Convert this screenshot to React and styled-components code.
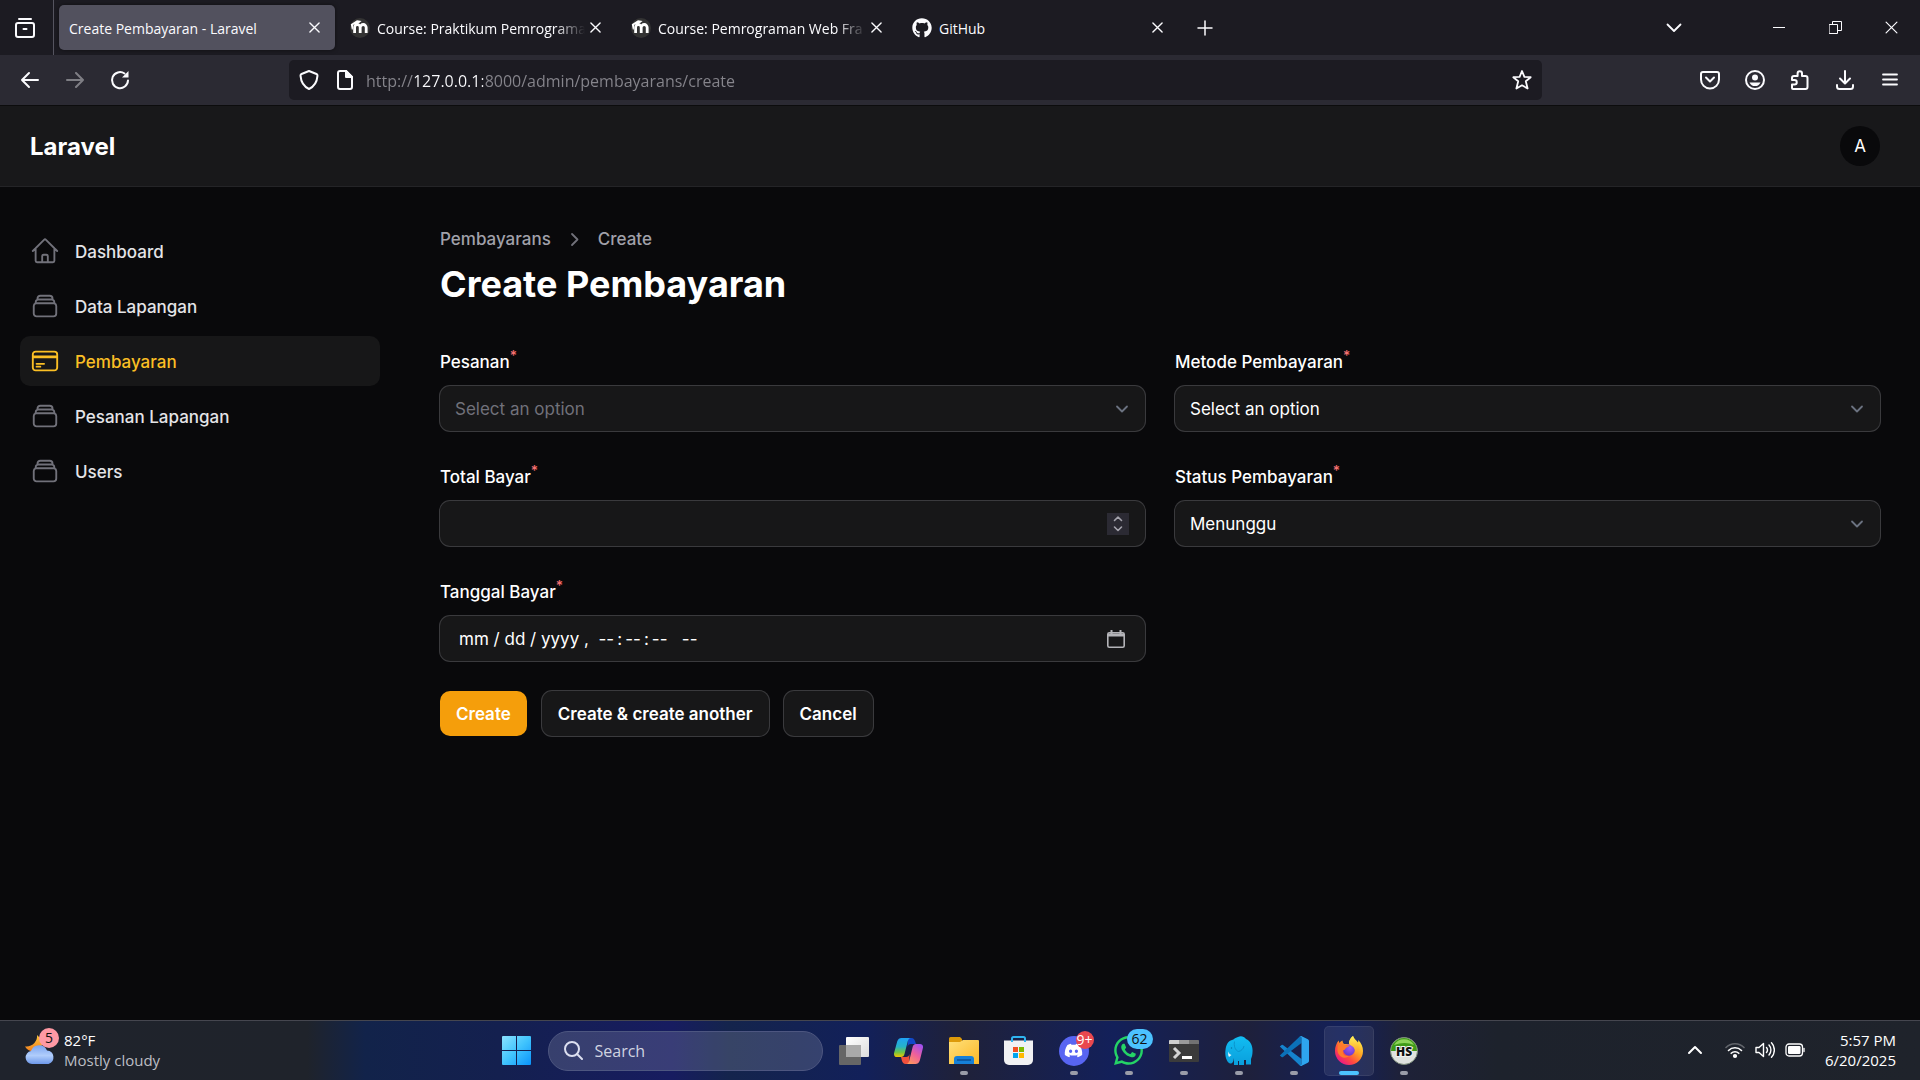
import React from "react";
import styled, { createGlobalStyle, css } from "styled-components";
import { HiOutlineHome, HiOutlineRectangleStack, HiOutlineCreditCard } from "react-icons/hi2";
import { FaGithub, FaDiscord, FaWhatsapp } from "react-icons/fa6";

const ui = `"Inter", "Roboto", sans-serif`;
const system = `"Open Sans", "Noto Sans", sans-serif`;

const GlobalStyle = createGlobalStyle`
  *, *::before, *::after { box-sizing: border-box; }
  body { margin: 0; background: #09090b; font-family: ${ui}; color: #fff; }
  button, input, select { font: inherit; color: inherit; margin: 0; }
  button { border: 0; background: none; padding: 0; cursor: pointer; }
  a { color: inherit; text-decoration: none; }
  svg { display: block; flex: none; }
`;

const Screen = styled.div`
  display: flex;
  flex-direction: column;
  min-height: 100vh;
`;

/* ---------- browser window ---------- */

const TabStrip = styled.div`
  display: flex;
  align-items: center;
  height: 55px;
  background: #1c1b22;
  color: #fbfbfe;
  font: 14px/20px ${system};
`;

const StripStart = styled.div`
  display: flex;
  align-items: center;
  justify-content: center;
  width: 54px;
  height: 55px;
  padding-right: 3px;
  border-right: 1px solid #55545f;
`;

const Tabs = styled.div`
  display: flex;
  gap: 5px;
  padding-left: 5px;
`;

const Tab = styled.div`
  display: flex;
  align-items: center;
  gap: 7px;
  width: 276px;
  height: 45px;
  padding: 0 11px 0 10px;
  border-radius: 5px;
  ${(p) => p.$active && css`
    background: #52515e;
    box-shadow: 0 0 4px rgba(0, 0, 0, 0.5);
  `}
`;

const TabTitle = styled.span`
  flex: 1;
  padding-top: 2px;
  overflow: hidden;
  white-space: nowrap;
  ${(p) => p.$fade && css`
    mask-image: linear-gradient(to left, transparent, #000 30px);
    margin-right: -7px;
  `}
`;

const IconButton = styled.button`
  display: flex;
  align-items: center;
  justify-content: center;
  width: ${(p) => p.$w || 45}px;
  height: ${(p) => p.$h || 40}px;
  opacity: ${(p) => (p.$dim ? 0.4 : 1)};
`;

const WindowControls = styled.div`
  display: flex;
  align-items: center;
  margin-left: auto;
`;

const ListTabs = styled.div`
  padding-right: 54px;
`;

const Toolbar = styled.div`
  display: flex;
  align-items: center;
  height: 51px;
  padding: 0 8px 0 7px;
  background: #2b2a33;
  border-bottom: 1px solid #0c0c0d;
  color: #fbfbfe;
`;

const NavButtons = styled.div`
  display: flex;
  flex: 0 1 282px;
`;

const AddressBar = styled.div`
  display: flex;
  align-items: center;
  flex: 1;
  height: 40px;
  padding: 0 1px 0 2px;
  border-radius: 5px;
  background: #1c1b22;
`;

const Address = styled.input`
  flex: 1;
  min-width: 0;
  height: 32px;
  margin-left: 4px;
  padding: 2px 0 0;
  border: 0;
  outline: 0;
  font: 16px/24px ${system};
  color: #8f8f9a;
  -webkit-text-fill-color: transparent;
  background: linear-gradient(to right, #86858c 49px, #fbfbfe 49px, #fbfbfe 117px, #86858c 117px);
  background-clip: text;
  -webkit-background-clip: text;
`;

const ToolbarEnd = styled.div`
  display: flex;
  justify-content: flex-end;
  flex: 0 1 370px;
`;

/* ---------- admin page ---------- */

const Topbar = styled.header`
  display: flex;
  align-items: center;
  justify-content: space-between;
  height: 81px;
  padding: 0 40px 0 30px;
  background: #18181a;
  border-bottom: 1px solid #242427;
`;

const Brand = styled.a`
  padding-top: 2px;
  font-size: 24px;
  font-weight: 700;
  line-height: 32px;
`;

const Avatar = styled.button`
  width: 40px;
  height: 40px;
  border-radius: 50%;
  background: #09090b;
  font-size: 17px;
`;

const Page = styled.div`
  display: flex;
  flex: 1;
`;

const Sidebar = styled.nav`
  display: flex;
  flex-direction: column;
  gap: 5px;
  width: 400px;
  padding: 39px 20px;
`;

const NavItem = styled.a`
  display: flex;
  align-items: center;
  gap: 15px;
  height: 50px;
  padding: 0 10px;
  border-radius: 10px;
  font-size: 17px;
  font-weight: 500;
  color: ${(p) => (p.$active ? "#fbbf24" : "#e4e4e7")};
  background: ${(p) => (p.$active ? "#171718" : "transparent")};
  svg {
    width: 30px;
    height: 30px;
    color: ${(p) => (p.$active ? "#fbbf24" : "#71717a")};
  }
`;

const NavText = styled.span`
  padding-top: 2px;
`;

const Main = styled.main`
  display: flex;
  flex-direction: column;
  flex: 1;
  padding: 37px 40px;
`;

const Breadcrumbs = styled.nav`
  display: flex;
  align-items: center;
  gap: 11px;
  font-size: 17px;
  line-height: 30px;
  font-weight: 500;
  color: #a1a1aa;
`;

const Title = styled.h1`
  margin: 6px 0 38px;
  font-size: 36px;
  line-height: 48px;
  font-weight: 700;
`;

const Form = styled.form`
  display: grid;
  grid-template-columns: 1fr 1fr;
  gap: 30px;
`;

const Field = styled.div`
  display: flex;
  flex-direction: column;
  gap: 8px;
`;

const Label = styled.label`
  font-size: 17px;
  line-height: 32px;
  font-weight: 500;
  color: #fff;
`;

const Required = styled.sup`
  font-size: 14px;
  line-height: 0;
  color: #f87171;
`;

const Control = styled.div`
  position: relative;
  display: flex;
  align-items: center;
  height: 45px;
  border-radius: 10px;
  background: #171718;
  box-shadow: 0 0 0 1px #3a3a3d;
`;

const inputBase = css`
  width: 100%;
  height: 45px;
  padding: 0 15px;
  border: 0;
  outline: 0;
  background: transparent;
  font-size: 17px;
`;

const Select = styled.select`
  ${inputBase}
  appearance: none;
  color: ${(p) => (p.$muted ? "#71717a" : "#fff")};
`;

const Chevron = styled.svg`
  position: absolute;
  right: 13px;
  pointer-events: none;
`;

const TextInput = styled.input`
  ${inputBase}
  padding-left: ${(p) => (p.$date ? 19 : 15)}px;
  appearance: textfield;
  &::-webkit-inner-spin-button { appearance: none; margin: 0; }
`;

const Stepper = styled.div`
  display: flex;
  flex-direction: column;
  flex: none;
  margin-right: 16px;
  background: #2b2a33;
`;

const PickerButton = styled.button`
  flex: none;
  margin-right: 19px;
`;

const Actions = styled.div`
  display: flex;
  gap: 15px;
  grid-column: 1 / -1;
`;

const ActionButton = styled.button`
  height: 45px;
  padding: 0 16px;
  border-radius: 10px;
  font-size: 17px;
  font-weight: 600;
  background: ${(p) => (p.$primary ? "#f59e0b" : "#171718")};
  box-shadow: ${(p) => (p.$primary ? "none" : "0 0 0 1px #3a3a3d")};
`;

/* ---------- taskbar ---------- */

const Taskbar = styled.footer`
  display: grid;
  grid-template-columns: 1fr auto 1fr;
  align-items: center;
  height: 60px;
  border-top: 1px solid #45464f;
  background: linear-gradient(to right, #1f232c 0, #1f232b 16%, #12234a 19%, #14204f 26%, #171c60 35%, #14244c 38%,
    #12205a 45%, #1f2139 50%, #13205a 58%, #1e203b 65%, #13205a 70%, #1e2138 73%, #1d222c 78%, #1f232b 100%);
  font: 15px/20px ${system};
`;

const Weather = styled.button`
  display: flex;
  align-items: center;
  gap: 9px;
  padding: 0 0 1px 25px;
  text-align: left;
`;

const WeatherIcon = styled.span`
  position: relative;
`;

const WeatherText = styled.span`
  display: flex;
  flex-direction: column;
`;

const Faint = styled.span`
  color: #bcbec4;
`;

const Badge = styled.span`
  position: absolute;
  top: ${(p) => p.$top}px;
  right: ${(p) => p.$right}px;
  min-width: ${(p) => p.$min || 20}px;
  height: ${(p) => p.$h || 20}px;
  border-radius: 10px;
  background: ${(p) => p.$bg};
  color: ${(p) => p.$fg || "#111"};
  font: 14px/${(p) => p.$h || 20}px ${system};
  text-align: center;
`;

const Apps = styled.div`
  display: flex;
  align-items: center;
  gap: 5px;
`;

const SearchBox = styled.label`
  display: flex;
  align-items: center;
  gap: 12px;
  width: 275px;
  height: 40px;
  margin: 0 1px;
  padding: 0 15px;
  border: 1px solid #4d5680;
  border-radius: 20px;
  background: rgba(255, 255, 255, 0.15);
`;

const SearchInput = styled.input`
  width: 100%;
  padding: 0;
  border: 0;
  outline: 0;
  background: transparent;
  font: 16px/24px ${system};
  &::placeholder { color: #d0d3e0; opacity: 1; }
`;

const AppTile = styled.button`
  position: relative;
  display: flex;
  align-items: center;
  justify-content: center;
  width: 50px;
  height: 50px;
  border-radius: 5px;
  ${(p) => p.$active && css`
    background: rgba(255, 255, 255, 0.08);
    box-shadow: inset 0 0 0 1px rgba(255, 255, 255, 0.07);
  `}
  &::after {
    content: "";
    display: ${(p) => (p.$running || p.$active ? "block" : "none")};
    position: absolute;
    bottom: 1px;
    left: calc(50% - ${(p) => (p.$active ? 10 : 4)}px);
    width: ${(p) => (p.$active ? 20 : 8)}px;
    height: 4px;
    border-radius: 2px;
    background: ${(p) => (p.$active ? "#4cc2ff" : "#9a9ca8")};
  }
`;

const DiscordMark = styled.span`
  display: flex;
  align-items: center;
  justify-content: center;
  width: 30px;
  height: 30px;
  border-radius: 50%;
  background: #5865f2;
`;

const Tray = styled.div`
  display: flex;
  align-items: center;
  justify-content: flex-end;
  padding: 0 24px 1px 0;
`;

const TrayButton = styled(IconButton)`
  margin-right: ${(p) => p.$gap || 0}px;
`;

const Clock = styled.button`
  display: flex;
  flex-direction: column;
  align-items: flex-end;
  margin-left: 15px;
`;

/* ---------- drawings ---------- */

const Line = ({ size = 20, w = 2, box = 20, children, ...rest }) => (
  <svg width={size} height={size} viewBox={`0 0 ${box} ${box}`} fill="none" stroke="currentColor"
    strokeWidth={w} strokeLinecap="round" strokeLinejoin="round" {...rest}>
    {children}
  </svg>
);

const CloseIcon = ({ size = 12, w = 1.5 }) => (
  <Line size={size} box={12} w={w}><path d="M1 1l10 10M11 1L1 11" /></Line>
);

const MoodleIcon = () => (
  <svg width="20" height="24" viewBox="0 0 20 24">
    <circle cx="10" cy="12" r="10" fill="#333" />
    <path d="M4.6 17v-5.5a2.8 2.8 0 0 1 5.6 0V17M10.2 17v-5.5a3 3 0 0 1 6 0V17" fill="none" stroke="#fff" strokeWidth="2.8" />
    <path d="M.8 8.2L7 4.2l4.6.8-4 3.2-4.4.6-.4 4.6-1 .2z" fill="#fff" />
  </svg>
);

const ChevronDown = () => (
  <Chevron width="20" height="20" viewBox="0 0 20 20" fill="none" stroke="#6b7280" strokeWidth="1.8"
    strokeLinecap="round" strokeLinejoin="round">
    <path d="M5 7.5l5 5 5-5" />
  </Chevron>
);

const MoonCloud = () => (
  <svg width="30" height="30" viewBox="0 0 30 30">
    <defs>
      <linearGradient id="moon" x1="0" y1="0" x2="0" y2="1">
        <stop offset="0" stopColor="#ffc83d" /><stop offset="1" stopColor="#f0801f" />
      </linearGradient>
      <linearGradient id="cloud" x1="0" y1="0" x2="0" y2="1">
        <stop offset="0" stopColor="#7aa3f0" /><stop offset=".55" stopColor="#b0cdfb" /><stop offset="1" stopColor="#6d98ea" />
      </linearGradient>
    </defs>
    <path d="M12 0c1 6-5 12.500-12 11.500C2 15 6 17 10 16c6-1 9-7 6-12z" fill="url(#moon)" />
    <path d="M7 29a6.500 6.500 0 0 1-1-12.900A8.500 8.500 0 0 1 22 15.500 6.900 6.900 0 0 1 23.500 29z" fill="url(#cloud)" />
  </svg>
);

const WindowsLogo = () => (
  <svg width="29" height="29" viewBox="0 0 29 29">
    <defs>
      <linearGradient id="win" x1="0" y1="0" x2="1" y2="1">
        <stop offset="0" stopColor="#8be2ff" /><stop offset=".5" stopColor="#41c4fd" /><stop offset="1" stopColor="#0a93fb" />
      </linearGradient>
    </defs>
    <path d="M1 0h13v14H0V1a1 1 0 0 1 1-1zM15 0h13a1 1 0 0 1 1 1v13H15zM0 15h14v14H1a1 1 0 0 1-1-1zM15 15h14v13a1 1 0 0 1-1 1H15z" fill="url(#win)" />
  </svg>
);

const TaskViewIcon = () => (
  <svg width="30" height="28" viewBox="0 0 30 28">
    <defs>
      <linearGradient id="pane" x1="0" y1="0" x2="1" y2="1">
        <stop offset="0" stopColor="#fff" /><stop offset="1" stopColor="#dcdcdc" />
      </linearGradient>
    </defs>
    <rect x="0" y="8" width="22" height="20" rx="1" fill="#666" />
    <rect x="7" y="0" width="23" height="20" rx="1" fill="url(#pane)" />
    <path d="M7 8h15v12H7z" fill="#a9a9a9" />
  </svg>
);

const CopilotIcon = () => (
  <svg width="29" height="26" viewBox="0 0 29 26">
    <defs>
      <linearGradient id="cpA" x1="0" y1="0" x2="0" y2="1">
        <stop offset="0" stopColor="#1fa2f5" /><stop offset=".45" stopColor="#26b3c9" /><stop offset=".75" stopColor="#6fc544" /><stop offset="1" stopColor="#f4c400" />
      </linearGradient>
      <linearGradient id="cpB" x1=".8" y1="0" x2=".2" y2="1">
        <stop offset="0" stopColor="#a050f0" /><stop offset=".5" stopColor="#f0609a" /><stop offset="1" stopColor="#ff9a5c" />
      </linearGradient>
    </defs>
    <path d="M14 0h3.500c2 0 3 1.500 3.500 3l1 3h-5c-2 0-3 1-3.500 3z" fill="#1248c8" />
    <path d="M15 26h-3.500c-2 0-3-1.500-3.500-3l-1-4h5c2 0 3-1 3.500-3z" fill="#f0503c" />
    <path d="M7.500 0H17c-2 0-2.700 1.500-3.200 3l-3.300 13c-.5 2-1.500 3-3.500 3H3c-2.500 0-3.500-2-2.800-4.500l3-11C4 1 5.500 0 7.500 0z" fill="url(#cpA)" />
    <path d="M21.500 26H12c2 0 2.700-1.500 3.200-3l3.300-13.500c.5-2 1.500-3.500 3.500-3.500h4c2.500 0 3.500 2 2.800 4.500l-3 12C25 25 23.500 26 21.500 26z" fill="url(#cpB)" />
  </svg>
);

const FolderIcon = () => (
  <svg width="30" height="27" viewBox="0 0 30 27">
    <defs>
      <linearGradient id="folder" x1="0" y1="0" x2="1" y2="1">
        <stop offset="0" stopColor="#ffe07a" /><stop offset="1" stopColor="#fcb827" />
      </linearGradient>
    </defs>
    <path d="M0 1.500A1.500 1.500 0 0 1 1.500 0H11l2 2v3H0z" fill="#dd9a0a" />
    <path d="M0 5h11l3-2H29a1 1 0 0 1 1 1V27H0z" fill="url(#folder)" />
    <path d="M5 27v-5a3 3 0 0 1 3-3h14a3 3 0 0 1 3 3v5z" fill="#1680d8" />
    <path d="M8 23h14" stroke="#0b4f94" strokeWidth="1.500" />
  </svg>
);

const StoreIcon = () => (
  <svg width="29" height="29" viewBox="0 0 29 29">
    <path d="M0 4.500h29V24a5 5 0 0 1-5 5H5a5 5 0 0 1-5-5z" fill="#f1f1f3" />
    <path d="M8 6V2.500A1.500 1.500 0 0 1 9.500 1h10A1.500 1.500 0 0 1 21 2.500V6" fill="none" stroke="#2fb4f0" strokeWidth="2" />
    <path d="M9 11h5v5H9z" fill="#f25022" /><path d="M15 11h5v5h-5z" fill="#7fba00" />
    <path d="M9 17h5v5H9z" fill="#00a4ef" /><path d="M15 17h5v5h-5z" fill="#ffb900" />
  </svg>
);

const TerminalIcon = () => (
  <svg width="30" height="22" viewBox="0 0 30 22">
    <rect width="30" height="22" rx="1" fill="#3b3b3b" />
    <path d="M0 1a1 1 0 0 1 1-1h9v4H0z" fill="#d0d0d0" /><path d="M10 0h10v4H10z" fill="#9a9a9a" />
    <path d="M20 0h9a1 1 0 0 1 1 1v3H20z" fill="#727272" />
    <path d="M5 8l5 5-5 5" fill="none" stroke="#d4d4d4" strokeWidth="3" /><path d="M13 16h10v3H13z" fill="#fff" />
  </svg>
);

const ElephantIcon = () => (
  <svg width="28" height="30" viewBox="0 0 28 30">
    <defs>
      <linearGradient id="elephant" x1="0" y1="0" x2="0" y2="1">
        <stop offset="0" stopColor="#12bdf2" /><stop offset="1" stopColor="#0a9fdc" />
      </linearGradient>
    </defs>
    <path d="M13 1c3-1.500 6-.5 8 2C25.500 5 28 10 27.500 16c0 3-.8 5-1.500 7v5.500h-5V24h-2v5h-5v-4h-1v4H9V22c-.5 3-1 5.500-3.500 5.500C2 27.500-.5 20 .5 14 1 9 3 5 7 4c2-.5 3-2.300 6-3z" fill="url(#elephant)" />
    <path d="M9.500 5.500c-.8 4 .5 9 4 10 2.500-.5 5-2.500 5.500-5.500" fill="none" stroke="#0a8dc4" strokeWidth=".8" />
    <path d="M3.500 15.500c.5 2.500 1.500 3 3 3.500l-2.500 2c-1-1.500-1-3.500-.5-5.500z" fill="#e8f6fd" />
    <circle cx="6.500" cy="12" r=".7" fill="#0873a3" />
  </svg>
);

const VsCodeIcon = () => (
  <svg width="30" height="30" viewBox="0 0 30 30">
    <path d="M.8 10.600L2.600 9Q3.300 8.500 4 9L22.500 23V30Q21 30 20.500 29.300Z" fill="#1583cd" />
    <path d="M.8 19.400L2.600 21Q3.300 21.500 4 21L22.500 7V0Q21 0 20.500 .7Z" fill="#0b71b8" />
    <path d="M22.300 0L28.800 3.200Q30 3.800 30 5V25Q30 26.200 28.800 26.800L22.300 30Q21 30 20.500 29.300Q22.500 30 22.500 28V2Q22.500 0 20.500 .7Q21 0 22.300 0Z" fill="#2ea5ef" />
  </svg>
);

const FirefoxIcon = () => (
  <svg width="28" height="29" viewBox="0 0 28 29">
    <defs>
      <linearGradient id="ffBody" x1=".9" y1=".1" x2=".2" y2=".95">
        <stop offset="0" stopColor="#fff04a" /><stop offset=".4" stopColor="#ffa022" />
        <stop offset=".7" stopColor="#ff4b3e" /><stop offset="1" stopColor="#e8168a" />
      </linearGradient>
      <linearGradient id="ffFlame" x1="0" y1="0" x2="0" y2="1">
        <stop offset="0" stopColor="#fff25a" /><stop offset="1" stopColor="#ff9a20" />
      </linearGradient>
      <radialGradient id="ffGlobe" cx=".6" cy=".3" r=".8">
        <stop offset="0" stopColor="#a35cf5" /><stop offset="1" stopColor="#5b34c8" />
      </radialGradient>
    </defs>
    <path d="M18 0c1 3 3 4 5 6.500.3-1 .3-1.500.2-2.500C26.500 7 28 11 28 15a14 14 0 0 1-28 0c0-4 1.300-7.500 3.600-10.500L4.400 7C5.300 5.800 6.200 5 7.500 4.500c.2 1.500.5 2.500 1.500 3.500h5c0-3.500 1.500-6 4-8z" fill="url(#ffBody)" />
    <circle cx="14" cy="14" r="5.800" fill="url(#ffGlobe)" />
    <path d="M18 0c1 3 3 4 4.500 7 2 4 1 9-2.500 11.500 1-4-.5-7.500-4-9-2-1-2-2.500-2-3.500C14.500 3.500 16 1.500 18 0z" fill="url(#ffFlame)" />
    <path d="M3.600 8c3-.8 5 0 6.500 1.200H15c-1 1.800-4 2-4.500 3.300 0 1-1.500 1.500-2.500 2C7 18 10 20.500 14 20c-3 3-9 2-11-3-1-3-.6-6 .6-9z" fill="#ff7a2c" />
  </svg>
);

const HeidiIcon = () => (
  <svg width="28" height="28" viewBox="0 0 28 28">
    <circle cx="14" cy="14" r="13.500" fill="#dfe1de" stroke="#7b8b78" />
    <path d="M1 14a13 13 0 0 1 26 0z" fill="#3f9a18" />
    <path d="M4 8a11.500 11.500 0 0 1 20 0q-9-4-20 0z" fill="#8ed35a" />
    <text x="14" y="18.500" textAnchor="middle" fontFamily="Open Sans" fontWeight="800" fontSize="12" fill="#111" stroke="#f2f2f2" strokeWidth="2" paintOrder="stroke">HS</text>
  </svg>
);

const NAV = [
  ["Dashboard", HiOutlineHome],
  ["Data Lapangan", HiOutlineRectangleStack],
  ["Pembayaran", HiOutlineCreditCard],
  ["Pesanan Lapangan", HiOutlineRectangleStack],
  ["Users", HiOutlineRectangleStack],
];

const TABS = [
  { title: "Create Pembayaran - Laravel", active: true },
  { title: "Course: Praktikum Pemrograma", icon: <MoodleIcon />, fade: true },
  { title: "Course: Pemrograman Web Fra", icon: <MoodleIcon />, fade: true },
  { title: "GitHub", icon: <FaGithub size={20} /> },
];

const FieldLabel = ({ id, children }) => (
  <Label htmlFor={id}>{children}<Required>*</Required></Label>
);

function SelectField({ id, label, value, muted }) {
  return (
    <Field>
      <FieldLabel id={id}>{label}</FieldLabel>
      <Control>
        <Select id={id} $muted={muted} defaultValue={value}><option>{value}</option></Select>
        <ChevronDown />
      </Control>
    </Field>
  );
}

function BrowserChrome() {
  return (
    <>
      <TabStrip>
        <StripStart>
          <IconButton aria-label="Firefox View">
            <Line w={2} box={20} size={20}>
              <path d="M4 1h12" /><rect x="1" y="5" width="18" height="14" rx="2" /><path d="M8.500 11h3" />
            </Line>
          </IconButton>
        </StripStart>
        <Tabs>
          {TABS.map((t) => (
            <Tab key={t.title} $active={t.active}>
              {t.icon}
              <TabTitle $fade={t.fade}>{t.title}</TabTitle>
              <IconButton aria-label="Close tab" $w={20} $h={30}><CloseIcon size={11} /></IconButton>
            </Tab>
          ))}
        </Tabs>
        <IconButton aria-label="New tab" $w={54}><Line size={16} box={16} w={1.5}><path d="M8 1v14M1 8h14" /></Line></IconButton>
        <WindowControls>
          <ListTabs>
            <IconButton aria-label="List all tabs"><Line size={16} box={16} w={1.8}><path d="M1.500 4.500L8 11l6.500-6.500" /></Line></IconButton>
          </ListTabs>
          <IconButton aria-label="Minimize" $w={57}><Line size={12} box={12} w={1}><path d="M0 5.500h12" /></Line></IconButton>
          <IconButton aria-label="Restore" $w={56}>
            <Line size={13} box={13} w={1}><path d="M.5 3.500h8v9h-8zM3.500 3.500v-3h9v9h-4" /></Line>
          </IconButton>
          <IconButton aria-label="Close" $w={57}><CloseIcon size={13} w={1.1} /></IconButton>
        </WindowControls>
      </TabStrip>
      <Toolbar>
        <NavButtons>
          <IconButton aria-label="Back"><Line><path d="M18 10H2M9 3l-7 7 7 7" /></Line></IconButton>
          <IconButton aria-label="Forward" $dim><Line><path d="M2 10h16M11 3l7 7-7 7" /></Line></IconButton>
          <IconButton aria-label="Reload">
            <Line><path d="M18 10.500A8 8 0 1 1 14.500 3.500" /><path d="M18.500 1v6.500H12z" fill="currentColor" stroke="none" /></Line>
          </IconButton>
        </NavButtons>
        <AddressBar>
          <IconButton aria-label="Tracking protection" $w={36}>
            <Line><path d="M10 1l7.500 3c.8.3 1 .9 1 1.700C18 12 15.500 16.500 10 19 4.500 16.500 2 12 1.500 5.700c0-.8.200-1.400 1-1.700z" /></Line>
          </IconButton>
          <IconButton aria-label="Site information" $w={35}>
            <Line><path d="M5 1h6l6 6v10a2 2 0 0 1-2 2H5a2 2 0 0 1-2-2V3a2 2 0 0 1 2-2z" /><path d="M11 1v6h6z" fill="currentColor" /></Line>
          </IconButton>
          <Address aria-label="Address" defaultValue="http://127.0.0.1:8000/admin/pembayarans/create" />
          <IconButton aria-label="Bookmark" $w={38}>
            <Line w={1.8}><path d="M10 1l2.400 5.800 6.300.4-4.900 4 1.800 7.300-5.600-3.200-5.600 3.200 1.800-7.300-4.900-4 6.300-.4z" /></Line>
          </IconButton>
        </AddressBar>
        <ToolbarEnd>
          <IconButton aria-label="Pocket">
            <Line><path d="M3 2h14a2 2 0 0 1 2 2v5.500a9 9 0 0 1-18 0V4a2 2 0 0 1 2-2z" /><path d="M6 7.500l4 4 4-4" /></Line>
          </IconButton>
          <IconButton aria-label="Account">
            <Line><circle cx="10" cy="10" r="9" /><circle cx="10" cy="7.500" r="3" fill="currentColor" stroke="none" /><path d="M4.500 12.500h11a6 6 0 0 1-11 0z" fill="currentColor" stroke="none" /></Line>
          </IconButton>
          <IconButton aria-label="Extensions">
            <Line><path d="M3 19h12.500a2 2 0 0 0 2-2V8a2 2 0 0 0-2-2H12V3.500a2.200 2.200 0 0 0-4.400 0V6H4a2 2 0 0 0-2 2v2h2.500a2 2 0 0 1 0 4.500H2V18a1 1 0 0 0 1 1z" /></Line>
          </IconButton>
          <IconButton aria-label="Downloads">
            <Line><path d="M10 1v12M5 8.500l5 5 5-5M2 15v1.500A2.500 2.500 0 0 0 4.500 19h11a2.500 2.500 0 0 0 2.500-2.500V15" /></Line>
          </IconButton>
          <IconButton aria-label="Menu"><Line w={1.8}><path d="M3 4.500h14M3 9.500h14M3 14.500h14" /></Line></IconButton>
        </ToolbarEnd>
      </Toolbar>
    </>
  );
}

function AdminPage() {
  return (
    <>
      <Topbar>
        <Brand href="#">Laravel</Brand>
        <Avatar>A</Avatar>
      </Topbar>
      <Page>
        <Sidebar>
          {NAV.map(([name, Icon]) => (
            <NavItem key={name} href="#" $active={name === "Pembayaran"}><Icon /><NavText>{name}</NavText></NavItem>
          ))}
        </Sidebar>
        <Main>
          <Breadcrumbs>
            <a href="#">Pembayarans</a>
            <Line size={25} box={25} w={1.8} color="#71717a"><path d="M10 7l5.500 5.500L10 18" /></Line>
            <a href="#">Create</a>
          </Breadcrumbs>
          <Title>Create Pembayaran</Title>
          <Form onSubmit={(e) => e.preventDefault()}>
            <SelectField id="pesanan" label="Pesanan" value="Select an option" muted />
            <SelectField id="metode" label="Metode Pembayaran" value="Select an option" />
            <Field>
              <FieldLabel id="total">Total Bayar</FieldLabel>
              <Control>
                <TextInput id="total" type="number" />
                <Stepper>
                  <IconButton type="button" aria-label="Increase" $w={22} $h={11}>
                    <Line size={10} box={10} w={1.6} color="#a5a4ad"><path d="M1.500 7.500L5 4l3.500 3.500" /></Line>
                  </IconButton>
                  <IconButton type="button" aria-label="Decrease" $w={22} $h={11}>
                    <Line size={10} box={10} w={1.6} color="#a5a4ad"><path d="M1.500 3L5 6.500 8.500 3" /></Line>
                  </IconButton>
                </Stepper>
              </Control>
            </Field>
            <SelectField id="status" label="Status Pembayaran" value="Menunggu" />
            <Field>
              <FieldLabel id="tanggal">Tanggal Bayar</FieldLabel>
              <Control>
                <TextInput id="tanggal" type="text" $date defaultValue={"mm / dd / yyyy ,  --\u2009:\u2009--\u2009:\u2009--\u00a0\u00a0\u00a0--"} />
                <PickerButton type="button" aria-label="Open calendar">
                  <svg width="20" height="18" viewBox="0 0 20 18" fill="none" stroke="#b4b4b8" strokeWidth="1.600">
                    <rect x="1.800" y="2.800" width="16.400" height="14.400" rx="1.500" />
                    <path d="M2 5h16" strokeWidth="3" /><path d="M5.500 0v4M14.500 0v4" strokeWidth="2" />
                  </svg>
                </PickerButton>
              </Control>
            </Field>
            <Actions>
              <ActionButton $primary>Create</ActionButton>
              <ActionButton type="button">Create &amp; create another</ActionButton>
              <ActionButton type="button">Cancel</ActionButton>
            </Actions>
          </Form>
        </Main>
      </Page>
    </>
  );
}

function WindowsTaskbar() {
  return (
    <Taskbar>
      <Weather>
        <WeatherIcon><MoonCloud /><Badge $top={-7} $right={-4} $bg="#ff99a4">5</Badge></WeatherIcon>
        <WeatherText><span>82°F</span><Faint>Mostly cloudy</Faint></WeatherText>
      </Weather>
      <Apps>
        <AppTile aria-label="Start"><WindowsLogo /></AppTile>
        <SearchBox>
          <Line size={19} box={19} w={2} color="#dcdff0"><circle cx="8" cy="8" r="7" /><path d="M13 13l5 5" /></Line>
          <SearchInput aria-label="Search" placeholder="Search" />
        </SearchBox>
        <AppTile aria-label="Task view"><TaskViewIcon /></AppTile>
        <AppTile aria-label="Copilot"><CopilotIcon /></AppTile>
        <AppTile aria-label="File Explorer" $running><FolderIcon /></AppTile>
        <AppTile aria-label="Microsoft Store"><StoreIcon /></AppTile>
        <AppTile aria-label="Discord" $running>
          <DiscordMark><FaDiscord size={19} color="#fff" /></DiscordMark>
          <Badge $top={5} $right={5} $min={18} $h={18} $bg="#e9484f" $fg="#fff">9+</Badge>
        </AppTile>
        <AppTile aria-label="WhatsApp" $running>
          <FaWhatsapp size={33} color="#25d366" />
          <Badge $top={3} $right={1} $min={26} $bg="#4cc2ff">62</Badge>
        </AppTile>
        <AppTile aria-label="Terminal" $running><TerminalIcon /></AppTile>
        <AppTile aria-label="Laragon" $running><ElephantIcon /></AppTile>
        <AppTile aria-label="Visual Studio Code" $running><VsCodeIcon /></AppTile>
        <AppTile aria-label="Firefox" $active><FirefoxIcon /></AppTile>
        <AppTile aria-label="HeidiSQL" $running><HeidiIcon /></AppTile>
      </Apps>
      <Tray>
        <TrayButton aria-label="Hidden icons" $w={30} $gap={10}><Line size={16} box={16} w={2}><path d="M2 11l6-6 6 6" /></Line></TrayButton>
        <TrayButton aria-label="Network" $w={30}>
          <Line size={20} box={20} w={1.6}>
            <path d="M1 7.500a12.700 12.700 0 0 1 18 0" opacity=".3" /><path d="M3.500 10.500a9.200 9.200 0 0 1 13 0M6.200 13.300a5.400 5.400 0 0 1 7.600 0" />
            <circle cx="10" cy="16" r="1.300" fill="currentColor" />
          </Line>
        </TrayButton>
        <TrayButton aria-label="Volume" $w={30}>
          <Line size={20} box={20} w={1.4}>
            <path d="M1 7.500h3l4.500-4v13l-4.500-4H1zM11.500 7.500a4 4 0 0 1 0 5M14 5a7.500 7.500 0 0 1 0 10M16.500 2.800a10.500 10.500 0 0 1 0 14.400" />
          </Line>
        </TrayButton>
        <TrayButton aria-label="Battery" $w={30}>
          <Line size={20} box={20} w={1.3}>
            <rect x="1" y="4" width="16.500" height="12" rx="3" /><rect x="3" y="6" width="12.500" height="8" rx="1.200" fill="currentColor" stroke="none" />
            <path d="M19 8.500v3" />
          </Line>
        </TrayButton>
        <Clock><span>5:57 PM</span><span>6/20/2025</span></Clock>
      </Tray>
    </Taskbar>
  );
}

export default function App() {
  return (
    <Screen>
      <GlobalStyle />
      <BrowserChrome />
      <AdminPage />
      <WindowsTaskbar />
    </Screen>
  );
}
